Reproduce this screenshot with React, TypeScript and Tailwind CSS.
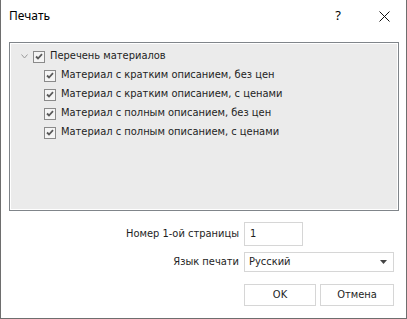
import React from "react";

const items = [
  "Материал с кратким описанием, без цен",
  "Материал с кратким описанием, с ценами",
  "Материал с полным описанием, без цен",
  "Материал с полным описанием, с ценами",
];

function CheckBox() {
  return (
    <span className="flex h-[12px] w-[12px] shrink-0 items-center justify-center border border-[#8a8a8a] bg-[#f4f4f4]">
      <svg width="8" height="7" viewBox="0 0 8 7">
        <path d="M1 3.5 L3 5.5 L7 1.2" fill="none" stroke="#5a5a5a" strokeWidth="1.8" />
      </svg>
    </span>
  );
}

export default function App() {
  return (
    <div
      className="flex h-[319px] w-[407px] flex-col border-x border-b border-[#6e6e6e] bg-white text-[#1e1e1e]"
      style={{ fontFamily: "'DejaVu Sans Condensed', 'DejaVu Sans', sans-serif" }}
    >
      {/* title bar */}
      <div className="flex h-[32px] shrink-0 items-center pl-[8px]">
        <span className="text-[12px] text-black" style={{ fontFamily: "'Segoe UI', 'Noto Sans', sans-serif" }}>
          Печать
        </span>
        <span className="ml-auto mr-[38px] text-[13px] text-black" style={{ fontFamily: "'Noto Sans', sans-serif" }}>
          ?
        </span>
        <svg className="mr-[16px]" width="11" height="11" viewBox="0 0 11 11">
          <path d="M0.5 0.5 L10.5 10.5 M10.5 0.5 L0.5 10.5" stroke="#111" strokeWidth="1" />
        </svg>
      </div>

      {/* tree panel */}
      <div className="ml-[8px] mt-[10px] h-[169px] w-[390px] shrink-0 border border-[#80858a]">
        <div className="h-full border border-white bg-[#ebebeb] pt-[3px] text-[11px]">
          <div className="flex h-[19px] items-center">
            <svg className="ml-[10px] mr-[5px]" width="7" height="5" viewBox="0 0 7 5">
              <path d="M0.5 0.5 L3.5 4 L6.5 0.5" fill="none" stroke="#9a9a9a" strokeWidth="1" />
            </svg>
            <CheckBox />
            <span className="ml-[5px]">Перечень материалов</span>
          </div>
          {items.map((t) => (
            <div key={t} className="flex h-[19px] items-center pl-[33px]">
              <CheckBox />
              <span className="ml-[5px]">{t}</span>
            </div>
          ))}
        </div>
      </div>

      {/* form */}
      <div className="mt-[11px] flex flex-col pr-[12px] text-[11px]">
        <div className="flex items-center justify-end">
          <span className="mr-[5px]">Номер 1-ой страницы</span>
          <div className="mr-[91px] flex h-[24px] w-[59px] items-center border border-[#d6d6d6] pl-[5px]">1</div>
        </div>
        <div className="mt-[6px] flex items-center justify-end">
          <span className="mr-[5px]">Язык печати</span>
          <div className="flex h-[20px] w-[150px] items-center justify-between border border-[#d6d6d6] pl-[4px] pr-[6px]">
            <span>Русский</span>
            <svg width="7" height="4" viewBox="0 0 7 4">
              <path d="M0 0 L7 0 L3.5 4 Z" fill="#444" />
            </svg>
          </div>
        </div>
        <div className="mt-[12px] flex justify-end gap-[4px]">
          <button className="h-[22px] w-[72px] border border-[#d6d6d6] bg-white text-[11px]">OK</button>
          <button className="h-[22px] w-[74px] border border-[#d6d6d6] bg-white text-[11px]">Отмена</button>
        </div>
      </div>
    </div>
  );
}
